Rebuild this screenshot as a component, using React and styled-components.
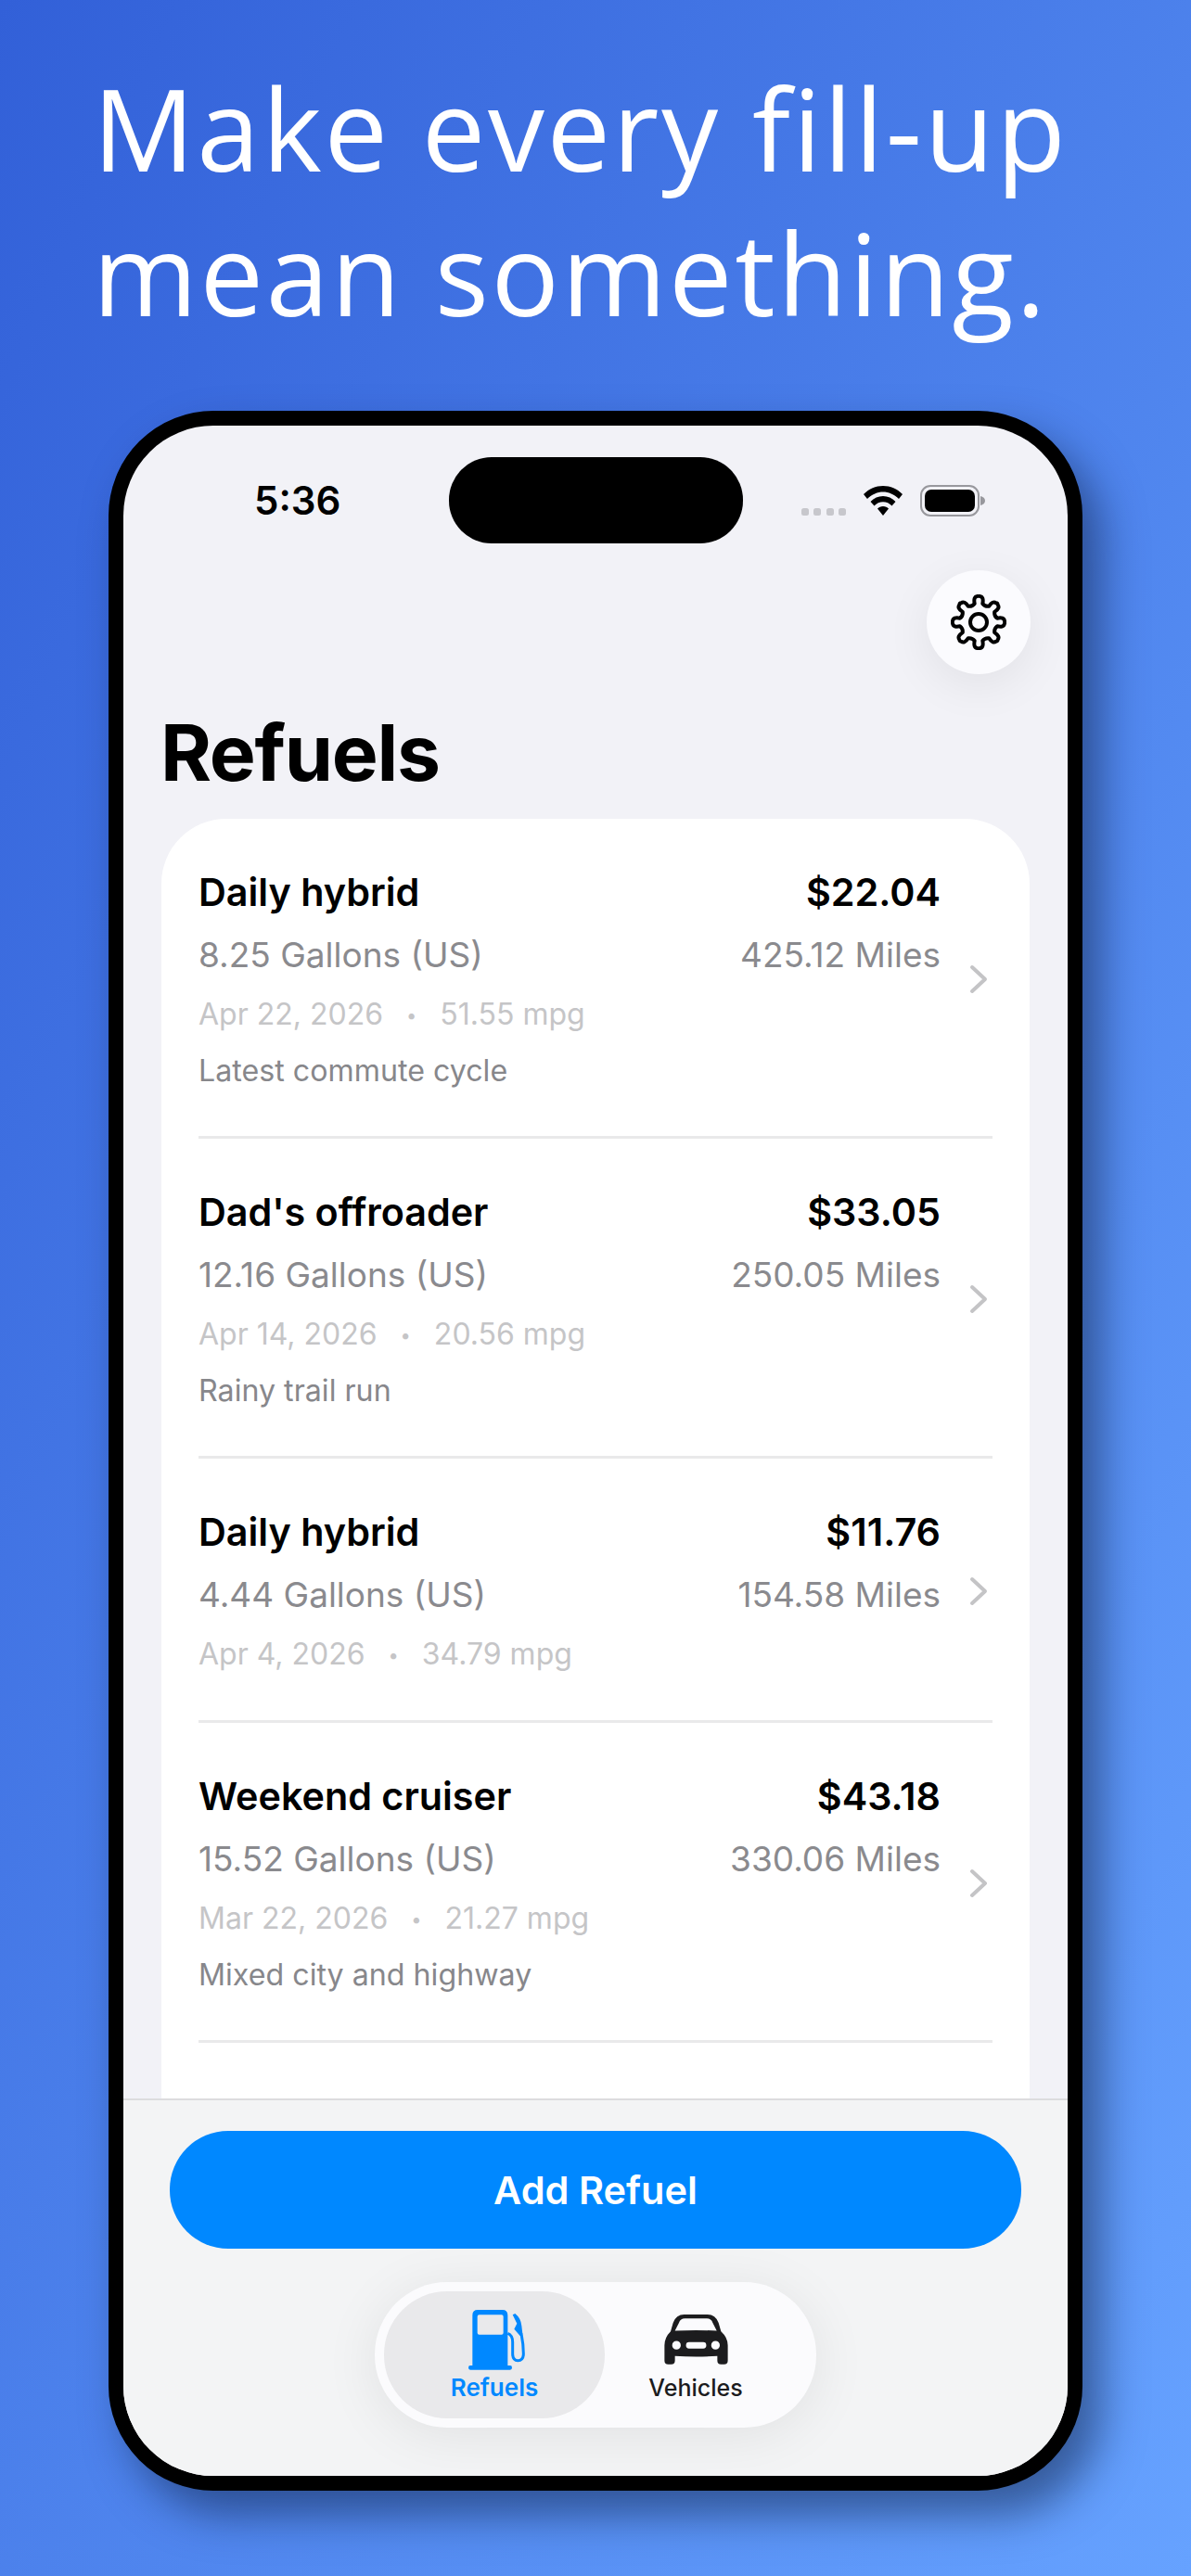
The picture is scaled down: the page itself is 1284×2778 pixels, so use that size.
import React from "react";
import styled, { createGlobalStyle } from "styled-components";

const GlobalStyle = createGlobalStyle`
  html, body {
    margin: 0;
    padding: 0;
  }
  * {
    box-sizing: border-box;
  }
  body {
    font-family: "Inter", "Liberation Sans", sans-serif;
  }
`;

const refuels = [
  { name: "Daily hybrid", cost: "$22.04", gallons: "8.25 Gallons (US)", miles: "425.12 Miles", date: "Apr 22, 2026", mpg: "51.55 mpg", note: "Latest commute cycle" },
  { name: "Dad's offroader", cost: "$33.05", gallons: "12.16 Gallons (US)", miles: "250.05 Miles", date: "Apr 14, 2026", mpg: "20.56 mpg", note: "Rainy trail run" },
  { name: "Daily hybrid", cost: "$11.76", gallons: "4.44 Gallons (US)", miles: "154.58 Miles", date: "Apr 4, 2026", mpg: "34.79 mpg" },
  { name: "Weekend cruiser", cost: "$43.18", gallons: "15.52 Gallons (US)", miles: "330.06 Miles", date: "Mar 22, 2026", mpg: "21.27 mpg", note: "Mixed city and highway" },
  { name: "Daily hybrid", cost: "$24.61", gallons: "9.02 Gallons (US)", miles: "402.77 Miles", date: "Mar 9, 2026", mpg: "44.65 mpg" },
];

// builds the outline of the settings cog
const gearPath = (teeth, outer, inner, cx, cy) => {
  const step = (Math.PI * 2) / teeth;
  const pt = (r, a) => `${(cx + r * Math.cos(a)).toFixed(2)} ${(cy + r * Math.sin(a)).toFixed(2)}`;
  let d = "";
  for (let i = 0; i < teeth; i++) {
    const a = i * step - Math.PI / 2;
    const w = step * 0.19;
    const v = step * 0.27;
    d += `${i === 0 ? "M" : "L"} ${pt(inner, a - v)} Q ${pt(outer, a - w - 0.06)} ${pt(outer, a - w * 0.3)} Q ${pt(outer + 1, a)} ${pt(outer, a + w * 0.3)} Q ${pt(outer, a + w + 0.06)} ${pt(inner, a + v)} Q ${pt(inner - 2.5, a + step / 2)} `;
    d += `${pt(inner, a + step - v)} `;
  }
  return d + "Z";
};

const Page = styled.div`
  width: 1284px;
  height: 2778px;
  overflow: hidden;
  background: linear-gradient(to bottom right, #3260d8 0%, #66a2ff 100%);
`;

const Headline = styled.h1`
  margin: 0;
  padding: 60px 0 0 100px;
  height: 443px;
  font-family: "Open Sans", sans-serif;
  font-weight: 400;
  font-size: 122px;
  line-height: 156px;
  letter-spacing: 2.6px;
  color: #fff;
`;

const Phone = styled.div`
  width: 1050px;
  height: 2243px;
  margin-left: 117px;
  border: 16px solid #000;
  border-radius: 113px;
  background: #000;
  box-shadow: 20px 26px 46px rgba(10, 25, 60, 0.5);
`;

const Screen = styled.div`
  height: 100%;
  border-radius: 97px;
  overflow: hidden;
  background: #f2f2f7;
  display: flex;
  flex-direction: column;
`;

const StatusBar = styled.div`
  display: grid;
  grid-template-columns: 1fr 317px 1fr;
  align-items: center;
  margin-top: 34px;
  height: 93px;
  flex: none;
`;

const Time = styled.div`
  font-size: 42px;
  font-weight: 600;
  color: #000;
  padding-left: 141px;
`;

const Island = styled.div`
  height: 93px;
  border-radius: 46px;
  background: #000;
`;

const StatusIcons = styled.div`
  display: flex;
  align-items: center;
  padding-left: 63px;
`;

const Signal = styled.div`
  display: flex;
  gap: 5.6px;
  margin: 0 19px 1px 0;
  align-self: flex-end;
`;

const SignalDot = styled.span`
  width: 8px;
  height: 8px;
  border-radius: 2.5px;
  background: #c7c7cc;
`;

const BatterySvg = styled.svg`
  margin-left: 19px;
`;

const TopActions = styled.div`
  display: flex;
  justify-content: flex-end;
  padding: 29px 40px 0 0;
  flex: none;
`;

const RoundButton = styled.div`
  width: 112px;
  height: 112px;
  border-radius: 50%;
  background: #fbfbfe;
  display: flex;
  align-items: center;
  justify-content: center;
  box-shadow: 0 12px 50px rgba(0, 0, 0, 0.07);
`;

const Title = styled.h2`
  margin: 35px 0 0 40px;
  font-size: 84px;
  line-height: 100px;
  font-weight: 700;
  letter-spacing: -1.3px;
  color: #000;
  flex: none;
`;

const ListArea = styled.div`
  flex: 1;
  min-height: 0;
  overflow: hidden;
  padding: 0 41px;
  margin-top: 21px;
`;

const Card = styled.div`
  background: #fff;
  border-radius: 70px 70px 0 0;
  padding: 0 40px;
`;

const Row = styled.div`
  display: flex;
  align-items: center;
  padding: 54px 0 50px;
  border-bottom: 3px solid #e9e9ea;
`;

const RowBody = styled.div`
  flex: 1;
  min-width: 0;
`;

const Line = styled.div`
  display: flex;
  justify-content: space-between;
  margin-top: ${(p) => p.$gap || 0}px;
`;

const Name = styled.span`
  font-size: 41.3px;
  line-height: 50px;
  font-weight: 600;
  color: #000;
`;

const Meta = styled.span`
  font-size: 37px;
  line-height: 44px;
  color: #8a8a8e;
`;

const DateLine = styled.span`
  font-size: 32px;
  line-height: 40px;
  color: #c5c5c7;
`;

const Dot = styled.span`
  margin: 0 25px;
  font-size: 20px;
  vertical-align: 3px;
`;

const Note = styled.div`
  font-size: 32.2px;
  line-height: 40px;
  color: #87878b;
  margin-top: 20px;
`;

const Chevron = styled.svg`
  flex: none;
  width: 22px;
  height: 32px;
  margin: 0 4px 0 30px;
`;

const BottomBar = styled.div`
  flex: none;
  height: 407px;
  background: #f3f4f5;
  border-top: 2px solid #dcdcde;
  padding: 33px 50px 0;
`;

const PrimaryButton = styled.div`
  height: 127px;
  border-radius: 63px;
  background: #0088ff;
  color: #fff;
  font-size: 41.5px;
  font-weight: 600;
  display: flex;
  align-items: center;
  justify-content: center;
`;

const TabBar = styled.div`
  width: 476px;
  height: 157px;
  margin: 36px auto 0;
  padding: 10px;
  border-radius: 78px;
  background: #fbfbfd;
  display: flex;
  box-shadow: 0 8px 60px rgba(0, 0, 0, 0.08);
`;

const Tab = styled.div`
  flex: none;
  width: ${(p) => (p.$active ? 238 : 196)}px;
  border-radius: 68px;
  background: ${(p) => (p.$active ? "#e9e9eb" : "transparent")};
  color: ${(p) => (p.$active ? "#0088ff" : "#1c1c1e")};
  display: flex;
  flex-direction: column;
  align-items: center;
`;

const TabIcon = styled.div`
  height: 68px;
  margin: 18px 0 0 ${(p) => (p.$active ? 6 : 0)}px;
  display: flex;
  align-items: center;
`;

const TabLabel = styled.div`
  font-size: ${(p) => (p.$active ? 26 : 25)}px;
  line-height: 30px;
  font-weight: ${(p) => (p.$active ? 600 : 500)};
  margin-top: 3px;
  white-space: nowrap;
`;

const WifiIcon = () => (
  <svg width="42" height="32" viewBox="0 0 42 32">
    <path d="M21 0C13 0 6 3 0 9l4 5C9 9 15 6.500 21 6.500S33 9 38 14l4-5C36 3 29 0 21 0Z" />
    <path d="M21 11c-5 0-10 2-13.500 6l4 4.500c2.500-2.700 6-4.200 9.500-4.200s7 1.500 9.500 4.200l4-4.500C31 13 26 11 21 11Z" />
    <path d="M21 22c-2.500 0-4.500 1-6 2.500L21 32l6-7.500C25.500 23 23.500 22 21 22Z" />
  </svg>
);

const BatteryIcon = () => (
  <BatterySvg width="70" height="34" viewBox="0 0 70 34">
    <rect x="1" y="1" width="62" height="32" rx="10" fill="none" stroke="#98989d" strokeWidth="2" />
    <rect x="5" y="5" width="54" height="24" rx="7" fill="#000" />
    <path d="M65 12c3 .5 5 2.500 5 5s-2 4.500-5 5Z" fill="#98989d" />
  </BatterySvg>
);

const GearIcon = () => (
  <svg width="60" height="60" viewBox="0 0 60 60" fill="none" stroke="#000" strokeWidth="4" strokeLinejoin="round">
    <path d={gearPath(8, 28, 20.500, 30, 30)} />
    <circle cx="30" cy="30" r="9" />
  </svg>
);

const PumpIcon = () => (
  <svg width="62" height="65" viewBox="375 268 186 195" fill="currentColor">
    <path
      fillRule="evenodd"
      d="M388 285Q388 268 405 268H485Q502 268 502 285V448H510Q516 448 516 455Q516 462 510 462H381Q375 462 375 455Q375 448 381 448H388ZM410 284H482Q488 284 488 290V342Q488 348 482 348H410Q404 348 404 342V290Q404 284 410 284Z"
    />
    <path d="M502 344Q518 350 518 372V410Q518 432 535 432Q553 432 553 410Q553 380 546 345" fill="none" stroke="currentColor" strokeWidth="9" />
    <path d="M518 284L526 280Q545 295 547 320L550 345L542 352L523 330L532 312Z" />
  </svg>
);

const CarIcon = () => (
  <svg width="69" height="54" viewBox="1005 285 208 163" fill="currentColor">
    <path
      fillRule="evenodd"
      d="M1070 285H1146Q1172 285 1182 312L1190 340Q1212 360 1212 385V435Q1212 447 1200 447H1190Q1178 447 1178 435V420Q1108 424 1040 420V435Q1040 447 1028 447H1018Q1006 447 1006 435V385Q1006 360 1026 340L1034 312Q1044 285 1070 285ZM1072 298H1144Q1158 298 1163 312L1176 338Q1108 334 1040 338L1053 312Q1058 298 1072 298ZM1045 371A14 14 0 1 0 1045 399A14 14 0 1 0 1045 371ZM1172 371A14 14 0 1 0 1172 399A14 14 0 1 0 1172 371ZM1086 375H1132Q1142 375 1142 385.500Q1142 396 1132 396H1086Q1076 396 1076 385.500Q1076 375 1086 375Z"
    />
  </svg>
);

const RefuelRow = ({ item }) => (
  <Row>
    <RowBody>
      <Line>
        <Name>{item.name}</Name>
        <Name>{item.cost}</Name>
      </Line>
      <Line $gap={21}>
        <Meta>{item.gallons}</Meta>
        <Meta>{item.miles}</Meta>
      </Line>
      <Line $gap={22}>
        <DateLine>
          {item.date}
          <Dot>•</Dot>
          {item.mpg}
        </DateLine>
      </Line>
      {item.note && <Note>{item.note}</Note>}
    </RowBody>
    <Chevron viewBox="0 0 22 32" fill="none" stroke="#c4c4c6" strokeWidth="4" strokeLinecap="round" strokeLinejoin="round">
      <path d="M4 3l14 13L4 29" />
    </Chevron>
  </Row>
);

const App = () => {
  return (
    <Page>
      <GlobalStyle />
      <Headline>
        Make every fill-up
        <br />
        mean something.
      </Headline>
      <Phone>
        <Screen>
          <StatusBar>
            <Time>5:36</Time>
            <Island />
            <StatusIcons>
              <Signal>
                <SignalDot />
                <SignalDot />
                <SignalDot />
                <SignalDot />
              </Signal>
              <WifiIcon />
              <BatteryIcon />
            </StatusIcons>
          </StatusBar>
          <TopActions>
            <RoundButton>
              <GearIcon />
            </RoundButton>
          </TopActions>
          <Title>Refuels</Title>
          <ListArea>
            <Card>
              {refuels.map((item, i) => (
                <RefuelRow key={i} item={item} />
              ))}
            </Card>
          </ListArea>
          <BottomBar>
            <PrimaryButton>Add Refuel</PrimaryButton>
            <TabBar>
              <Tab $active>
                <TabIcon $active>
                  <PumpIcon />
                </TabIcon>
                <TabLabel $active>Refuels</TabLabel>
              </Tab>
              <Tab>
                <TabIcon>
                  <CarIcon />
                </TabIcon>
                <TabLabel>Vehicles</TabLabel>
              </Tab>
            </TabBar>
          </BottomBar>
        </Screen>
      </Phone>
    </Page>
  );
};

export default App;
